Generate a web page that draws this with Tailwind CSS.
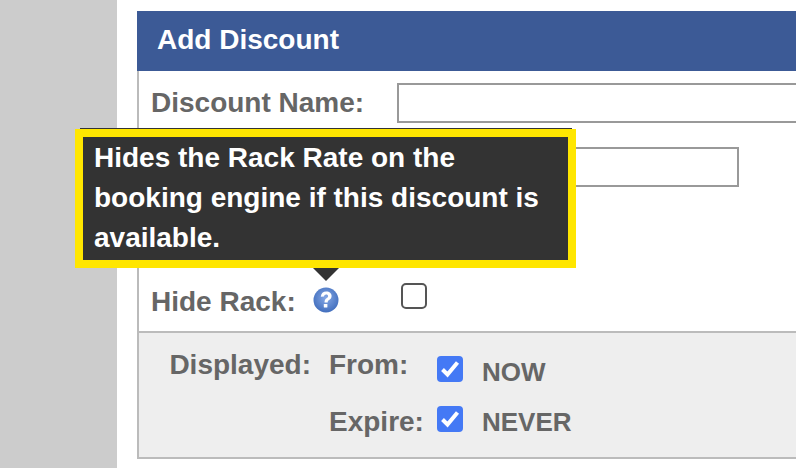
<!DOCTYPE html>
<html lang="en">
<head>
  <meta charset="UTF-8" />
  <title>Add Discount</title>
  <script src="https://cdn.jsdelivr.net/npm/@tailwindcss/browser@4"></script>
</head>
<body class="bg-white font-['Liberation_Sans',Arial,sans-serif] font-bold text-[#666] overflow-hidden">
  <div class="relative flex h-[468px] w-[796px] overflow-hidden">
    <!-- left gutter -->
    <div class="w-[117px] shrink-0 bg-[#ccc]"></div>

    <div class="w-[679px] shrink-0 overflow-hidden pl-5 pt-[11px]">
      <div class="w-[800px]">
        <h2 class="flex h-[60px] items-center bg-[#3c5a96] pl-5 pb-[3px] text-[28px] text-white">Add Discount</h2>

        <div class="h-[260px] border-l-2 border-[#bbb] bg-white">
          <div class="flex h-[64px] items-start pt-3 pl-3">
            <span class="w-[246px] text-[28px] leading-[40px]">Discount Name:</span>
            <input type="text" class="h-10 w-[500px] border-2 border-[#999] bg-white" />
          </div>
          <div class="flex h-[64px] items-start pl-[258px] pt-3">
            <input type="text" class="h-10 w-[342px] border-2 border-[#999] bg-white" />
          </div>
          <div class="h-[83px]"></div>
          <div class="flex h-[49px] items-start pl-3">
            <span class="w-[162px] text-[28px] leading-[40px]">Hide Rack:</span>
            <svg class="mt-[5px] h-[26px] w-[26px]" viewBox="0 0 26 26" aria-hidden="true">
              <defs>
                <radialGradient id="help-shade" cx="50%" cy="42%" r="60%">
                  <stop offset="0%" stop-color="#86a9e6" />
                  <stop offset="100%" stop-color="#3f6cbc" />
                </radialGradient>
              </defs>
              <circle cx="13" cy="13" r="12.500" fill="url(#help-shade)" />
              <path d="M7.800 9.800C8 6.300 10.200 4.500 13.300 4.500c3.200 0 5.300 1.900 5.300 4.500 0 2-1 3-2.500 4.100-1.100.8-1.400 1.200-1.400 2.400h-3.200c0-2.200.6-3.100 2-4.200 1.100-.8 1.600-1.300 1.600-2.100 0-1-.8-1.700-1.900-1.700-1.200 0-2 .8-2.200 2.100z" fill="#fff" />
              <rect x="10.800" y="17" width="3.600" height="3.600" rx=".6" fill="#fff" />
            </svg>
            <input type="checkbox" class="mt-[1px] ml-[62px] h-[26px] w-[26px] appearance-none rounded-[5px] border-2 border-[#555] bg-white" />
          </div>
        </div>

        <div class="h-[128px] border-y-2 border-l-2 border-[#bbb] bg-[#eee] pt-[15px]">
          <div class="flex h-[50px] items-start">
            <span class="w-[190px] pr-[18px] text-right text-[28px] leading-[34px]">Displayed:</span>
            <span class="w-[108px] text-[28px] leading-[34px]">From:</span>
            <span class="mt-[8px] flex h-[26px] w-[26px] items-center justify-center rounded-[4px] bg-[#4479f5]">
              <svg class="h-[22px] w-[22px]" viewBox="0 0 22 22" aria-hidden="true"><path d="M3.500 11.500l5 5 10-12" fill="none" stroke="#fff" stroke-width="4" /></svg>
            </span>
            <span class="ml-[19px] mt-[9px] text-[26px] leading-[30px]">NOW</span>
          </div>
          <div class="flex h-[50px] items-start">
            <span class="w-[190px]"></span>
            <span class="w-[108px] mt-[7px] text-[28px] leading-[34px]">Expire:</span>
            <span class="mt-[8px] flex h-[26px] w-[26px] items-center justify-center rounded-[4px] bg-[#4479f5]">
              <svg class="h-[22px] w-[22px]" viewBox="0 0 22 22" aria-hidden="true"><path d="M3.500 11.500l5 5 10-12" fill="none" stroke="#fff" stroke-width="4" /></svg>
            </span>
            <span class="ml-[19px] mt-[9px] text-[26px] leading-[30px]">NEVER</span>
          </div>
        </div>
      </div>
    </div>

    <!-- tooltip over the form -->
    <div class="absolute left-[80px] top-[128px] h-px w-[492px] bg-[#333]"></div>
    <div class="absolute left-[75px] top-[129px] h-[139px] w-[501px] border-[8px] border-[#ffe600] bg-[#333] pl-[11px] pt-px text-[28px] leading-[40px] text-white">
      Hides the Rack Rate on the<br />booking engine if this discount is<br />available.
    </div>
    <div class="absolute left-[313px] top-[268px] h-0 w-0 border-x-[13px] border-t-[13px] border-x-transparent border-t-[#333]"></div>
  </div>
</body>
</html>
